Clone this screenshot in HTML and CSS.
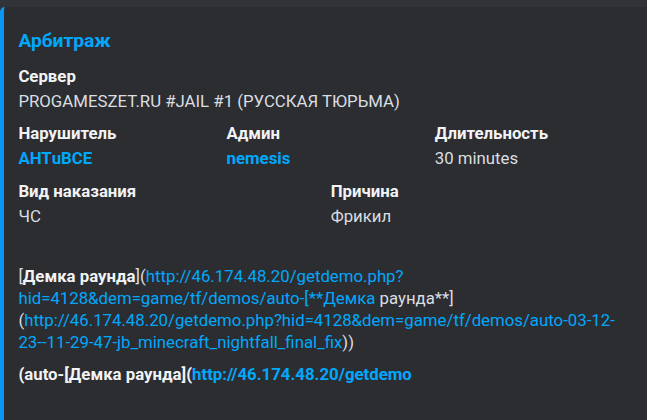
FILE: index.html
```html
<!DOCTYPE html>
<html>
<head>
    <meta charset="UTF-8">
    <link rel="stylesheet" href="styles.css">
</head>
<body>
    <div class="embed">
        <div class="embedTitle">Арбитраж</div>
        <div class="embedFields">
            <div class="field full">
                <div class="fieldName">Сервер</div>
                <div class="fieldValue">PROGAMESZET.RU #JAIL #1 (РУССКАЯ ТЮРЬМА)</div>
            </div>
            <div class="field third">
                <div class="fieldName">Нарушитель</div>
                <div class="fieldValue"><a class="link strong">АНТuВСЕ</a></div>
            </div>
            <div class="field third">
                <div class="fieldName">Админ</div>
                <div class="fieldValue"><a class="link strong">nemesis</a></div>
            </div>
            <div class="field third">
                <div class="fieldName">Длительность</div>
                <div class="fieldValue">30 minutes</div>
            </div>
            <div class="field half">
                <div class="fieldName">Вид наказания</div>
                <div class="fieldValue">ЧС</div>
            </div>
            <div class="field half">
                <div class="fieldName">Причина</div>
                <div class="fieldValue">Фрикил</div>
            </div>
            <div class="field full">
                <div class="fieldName">&nbsp;</div>
                <div class="fieldValue demo">[<b>Демка раунда</b>](<a class="link">http://46.174.48.20/getdemo.php?<br>hid=4128&amp;dem=game/tf/demos/auto-[**Демка</a> раунда**]<br>(<a class="link">http://46.174.48.20/getdemo.php?hid=4128&amp;dem=game/tf/demos/auto-03-12-<br>23--11-29-47-jb_minecraft_nightfall_final_fix</a>))</div>
            </div>
            <div class="field full">
                <div class="fieldName">(auto-[Демка раунда](<a class="link">http://46.174.48.20/getdemo</a></div>
                <div class="fieldValue">&nbsp;</div>
            </div>
        </div>
    </div>
</body>
</html>
```

FILE: styles.css
```css
body {
    margin: 0;
    padding-top: 7px;
    background-color: #313338;
    font-family: Roboto, "Noto Sans", sans-serif;
    overflow: hidden;
}

.embed {
    width: 615px;
    background-color: #2b2d31;
    border-left: 4px solid #0a96f5;
    border-radius: 5px;
    padding: 9.6px 19.2px 19.2px 14.4px;
}

.embedTitle {
    margin-top: 10.6px;
    font-size: 19.2px;
    line-height: 28px;
    font-weight: 700;
    color: #00a8fc;
}

.embedFields {
    margin-top: 9.6px;
    display: grid;
    grid-template-columns: repeat(12, 1fr);
    column-gap: 9.6px;
    row-gap: 10.4px;
}

.full {
    grid-column: span 12;
}

.third {
    grid-column: span 4;
}

.half {
    grid-column: span 6;
}

.fieldName {
    font-size: 16.8px;
    line-height: 22px;
    font-weight: 700;
    color: #f2f3f5;
    margin-bottom: 3px;
}

.fieldValue {
    font-size: 16.8px;
    line-height: 22px;
    color: #dbdee1;
}

.fieldValue b {
    color: #f2f3f5;
}

.demo {
    padding-top: 3px;
}

.link {
    color: #00a8fc;
}

.strong {
    font-weight: 700;
}
```
